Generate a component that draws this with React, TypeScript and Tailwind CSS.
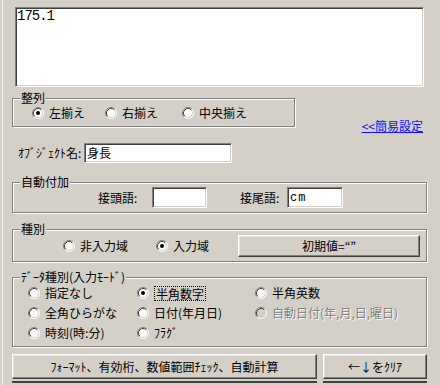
import type { ReactNode } from "react";

const sunken =
  "border border-t-[#808080] border-l-[#808080] border-b-white border-r-white shadow-[inset_1px_1px_0_#404040,inset_-1px_-1px_0_#d4d0c8] bg-white";
const raised =
  "border border-t-white border-l-white border-b-[#404040] border-r-[#404040] shadow-[inset_-1px_-1px_0_#808080,inset_1px_1px_0_#e8e6e1]";

function Radio({ checked = false, disabled = false }: { checked?: boolean; disabled?: boolean }) {
  return (
    <svg width="12" height="12" viewBox="0 0 12 12" className="shrink-0">
      <circle cx="6" cy="6" r="5" fill={disabled ? "#d4d0c8" : "#fff"} />
      <path d="M2.11 9.89 A5.5 5.5 0 0 1 9.89 2.11" fill="none" stroke="#808080" strokeWidth="1" />
      <path d="M9.89 2.11 A5.5 5.5 0 0 1 2.11 9.89" fill="none" stroke="#fff" strokeWidth="1" />
      <path d="M2.82 9.18 A4.5 4.5 0 0 1 9.18 2.82" fill="none" stroke="#404040" strokeWidth="1" />
      <path d="M9.18 2.82 A4.5 4.5 0 0 1 2.82 9.18" fill="none" stroke="#d4d0c8" strokeWidth="1" />
      {checked && <circle cx="6" cy="6" r="2" fill="#000" />}
    </svg>
  );
}

function Option({
  label,
  checked,
  disabled,
  focused,
  className = "",
}: {
  label: string;
  checked?: boolean;
  disabled?: boolean;
  focused?: boolean;
  className?: string;
}) {
  return (
    <div className={`flex items-center gap-[5px] ${className}`}>
      <Radio checked={checked} disabled={disabled} />
      <span
        className={
          disabled
            ? "text-[#808080] [text-shadow:1px_1px_0_#fff]"
            : focused
              ? "border border-dotted border-black px-[1px] leading-[13px]"
              : ""
        }
      >
        {label}
      </span>
    </div>
  );
}

function Group({ label, className, children }: { label: string; className: string; children: ReactNode }) {
  return (
    <div className={`relative border border-[#808080] shadow-[inset_1px_1px_0_#fff,1px_1px_0_#fff] ${className}`}>
      <span className="absolute left-[7px] top-[-8px] bg-[#d4d0c8] px-[1px] leading-[14px]">{label}</span>
      {children}
    </div>
  );
}

export default function App() {
  return (
    <div className="w-[440px] h-[385px] overflow-hidden bg-[#d4d0c8] text-black text-[12px] leading-[14px] font-['Noto_Sans_CJK_JP','Liberation_Sans',sans-serif]">
      <div className="ml-[2px] h-full border-l border-[#f4f2ee] pl-[9px] pr-[13px] pt-[7px]">
        {/* 入力値 */}
        <div className={`mx-[3px] h-[80px] pl-[1px] ${sunken}`}>
          <span className="font-['Liberation_Mono',monospace] text-[14px] tracking-[-1px] leading-[17px]">175.1</span>
        </div>

        {/* 整列 */}
        <div className="mt-[11px] flex h-[29px] items-start justify-between">
          <Group label="整列" className="h-[29px] w-[283px]">
            <div className="flex h-full items-center pl-[19px]">
              <Option label="左揃え" checked className="w-[73px]" />
              <Option label="右揃え" className="w-[77px]" />
              <Option label="中央揃え" />
            </div>
          </Group>
          <a className="mt-[21px] mr-[4px] text-[#1010ff] underline">&lt;&lt;簡易設定</a>
        </div>

        {/* オブジェクト名 */}
        <div className="mt-[16px] flex h-[20px] items-center">
          <span className="w-[72px] pl-[6px]">ｵﾌﾞｼﾞｪｸﾄ名:</span>
          <div className={`flex h-[20px] w-[148px] items-center pl-[2px] ${sunken}`}>身長</div>
        </div>

        {/* 自動付加 */}
        <Group label="自動付加" className="mt-[19px] h-[31px]">
          <div className="flex items-center pt-[4px] pl-[85px]">
            <span className="w-[54px]">接頭語:</span>
            <div className={`h-[21px] w-[55px] ${sunken}`} />
            <span className="ml-[33px] w-[47px]">接尾語:</span>
            <div className={`flex h-[21px] w-[56px] items-center pl-[2px] font-['Liberation_Mono',monospace] tracking-[1px] ${sunken}`}>
              cm
            </div>
          </div>
        </Group>

        {/* 種別 */}
        <Group label="種別" className="mt-[16px] h-[33px]">
          <div className="flex h-full items-center pl-[50px]">
            <Option label="非入力域" className="w-[93px]" />
            <Option label="入力域" checked className="w-[82px]" />
            <button className={`h-[22px] w-[182px] ${raised}`}>初期値=“”</button>
          </div>
        </Group>

        {/* データ種別 */}
        <Group label="ﾃﾞｰﾀ種別(入力ﾓｰﾄﾞ)" className="mt-[15px] h-[70px]">
          <div className="grid grid-cols-[109px_118px_1fr] grid-rows-[20px_20px_20px] items-center pt-[5px] pl-[15px]">
            <Option label="指定なし" />
            <Option label="半角数字" checked focused />
            <Option label="半角英数" />
            <Option label="全角ひらがな" />
            <Option label="日付(年月日)" />
            <Option label="自動日付(年,月,日,曜日)" disabled />
            <Option label="時刻(時:分)" />
            <Option label="ﾌﾗｸﾞ" />
          </div>
        </Group>

        {/* ボタン */}
        <div className="mt-[7px] flex gap-[6px]">
          <button className={`h-[25px] w-[305px] ${raised}`}>ﾌｫｰﾏｯﾄ、有効桁、数値範囲ﾁｪｯｸ、自動計算</button>
          <button className={`h-[25px] w-[104px] ${raised}`}>←↓をｸﾘｱ</button>
        </div>
        <div className="mt-[2px] flex gap-[6px]">
          <div className="h-[6px] w-[305px] border-t-2 border-[#404040]" />
          <div className="h-[6px] w-[104px] border-t-2 border-[#404040]" />
        </div>
      </div>
    </div>
  );
}
